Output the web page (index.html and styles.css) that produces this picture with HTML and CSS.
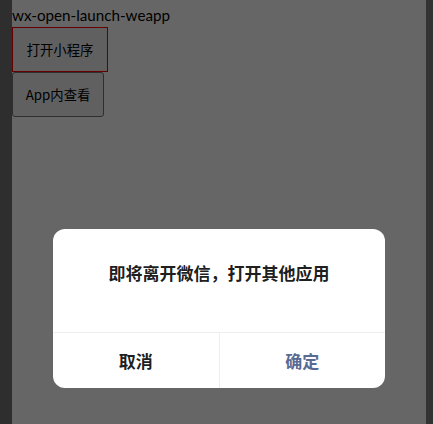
FILE: index.html
```html
<!DOCTYPE html>
<html lang="zh-CN">
<head>
<meta charset="utf-8">
<link rel="stylesheet" href="styles.css">
</head>
<body>
<div class="frame">
  <div class="edge edge-left"></div>
  <main class="page">
    <div class="tag">wx-open-launch-weapp</div>
    <button class="btn btn-weapp">打开小程序</button>
    <button class="btn btn-app">App内查看</button>
    <div class="mask">
      <div class="dialog">
        <div class="dialog-body">即将离开微信，打开其他应用</div>
        <div class="dialog-ft">
          <div class="dialog-btn cancel">取消</div>
          <div class="dialog-btn confirm">确定</div>
        </div>
      </div>
    </div>
  </main>
  <div class="edge edge-right"></div>
</div>
</body>
</html>
```

FILE: styles.css
```css
html, body {
  margin: 0;
  padding: 0;
  height: 100%;
}
body {
  background: #2f2f2f;
  font-family: "Lato", "Noto Sans CJK SC", sans-serif;
}
.frame {
  display: flex;
  height: 100%;
}
.edge-left {
  width: 12px;
  background: #2e2e2e;
}
.edge-right {
  width: 7px;
  background: #333333;
}
.page {
  flex: 1;
  position: relative;
  background: #ffffff;
  overflow: hidden;
}
.tag {
  padding-top: 4px;
  height: 23px;
  line-height: 23px;
  font-size: 15.2px;
  color: #000;
}
.btn {
  display: block;
  margin: 0;
  font-family: "Noto Sans CJK SC", sans-serif;
  font-size: 13.33px;
  line-height: 18px;
  color: #000;
  background: #efefef;
  padding: 12px 0;
  white-space: nowrap;
  text-align: center;
}
.btn-weapp {
  border: 1px solid #ff0000;
  border-radius: 0;
  width: 96px;
  height: 45px;
}
.btn-app {
  border: 1px solid #767676;
  border-radius: 3px;
  width: 92px;
  height: 45px;
}
.mask {
  position: absolute;
  inset: 0;
  background: rgba(0, 0, 0, 0.6);
  display: flex;
  align-items: flex-end;
  justify-content: center;
  padding-bottom: 36px;
}
.dialog {
  width: 332px;
  background: #fff;
  border-radius: 12px;
  overflow: hidden;
  font-family: "Noto Sans CJK SC", sans-serif;
}
.dialog-body {
  padding: 32px 24px 47px;
  text-align: center;
  font-size: 17px;
  line-height: 24px;
  font-weight: 700;
  color: rgba(0, 0, 0, 0.9);
}
.dialog-ft {
  display: flex;
  border-top: 1px solid #eeeeee;
}
.dialog-btn {
  flex: 1;
  height: 55px;
  line-height: 55px;
  text-align: center;
  font-size: 17px;
  font-weight: 700;
}
.cancel {
  color: rgba(0, 0, 0, 0.9);
  border-right: 1px solid #eeeeee;
}
.confirm {
  color: #576b95;
}
```
